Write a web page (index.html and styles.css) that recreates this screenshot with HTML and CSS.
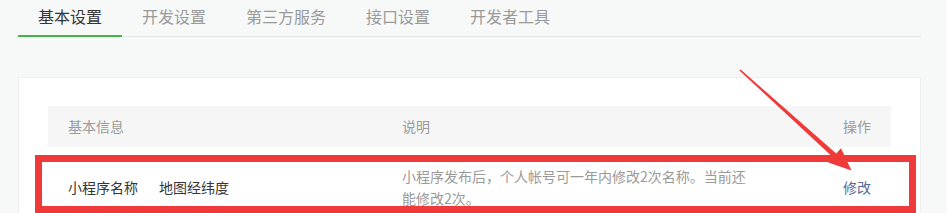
FILE: index.html
```html
<!DOCTYPE html>
<html lang="zh-CN">
<head>
<meta charset="utf-8">
<title>基本设置</title>
<link rel="stylesheet" href="styles.css">
</head>
<body>
<div class="page">
  <nav class="tabs">
    <a class="tab active">基本设置</a>
    <a class="tab">开发设置</a>
    <a class="tab">第三方服务</a>
    <a class="tab">接口设置</a>
    <a class="tab">开发者工具</a>
  </nav>
  <section class="card">
    <div class="table">
      <div class="thead">
        <div class="cell">基本信息</div>
        <div class="cell">说明</div>
        <div class="cell right">操作</div>
      </div>
      <div class="trow">
        <div class="cell name"><span class="label">小程序名称</span><span class="value">地图经纬度</span></div>
        <div class="cell desc"><p class="desc-text">小程序发布后，个人帐号可一年内修改2次名称。当前还能修改2次。</p></div>
        <div class="cell right"><a class="link">修改</a></div>
        <div class="highlight"></div>
      </div>
    </div>
  </section>
</div>
<svg class="arrow" width="947" height="213" viewBox="0 0 947 213">
  <polygon fill="#f03a3a" points="739.4,70.6 833.2,157.4 828.4,162.4 851.5,170.5 841,148.2 836.2,153.6 740.6,69.4"/>
</svg>
</body>
</html>
```
FILE: styles.css
```css
html, body {
  margin: 0;
  padding: 0;
  overflow: hidden;
  background: #f7f8f8;
}
body {
  position: relative;
  width: 947px;
  height: 213px;
  font-family: "Noto Sans CJK SC", "Noto Sans", sans-serif;
  font-size: 14px;
  color: #353535;
}
.page {
  padding-left: 18px;
  width: 903px;
}
.tabs {
  display: flex;
  border-bottom: 1px solid #e3e6e7;
  height: 36px;
}
.tab {
  display: block;
  padding: 0 20px 2px;
  line-height: 33px;
  font-size: 16px;
  color: #9a9a9a;
  border-bottom: 2px solid transparent;
  height: 35px;
  box-sizing: border-box;
  height: 37px;
}
.tab.active {
  color: #353535;
  border-bottom-color: #44b549;
}
.card {
  margin-top: 40px;
  background: #fff;
  border: 1px solid #eef0f0;
  padding: 28px 29px 30px;
}
.thead, .trow {
  display: grid;
  grid-template-columns: 334px 390px 1fr;
}
.thead {
  background: #f6f6f6;
  color: #9a9a9a;
}
.thead .cell {
  padding: 10px 20px;
  line-height: 21px;
}
.trow {
  position: relative;
  align-items: center;
}
.trow .cell {
  padding: 18px 20px;
  line-height: 22px;
}
.right {
  text-align: right;
}
.value {
  margin-left: 21px;
}
.desc-text {
  margin: 0;
  width: 352px;
  color: #9a9a9a;
}
.link {
  color: #576b95;
  text-decoration: none;
}
.highlight {
  position: absolute;
  left: -13px;
  top: 8px;
  right: -25px;
  bottom: 14px;
  border: 7px solid #f03a3a;
  pointer-events: none;
}
.arrow {
  position: absolute;
  left: 0;
  top: 0;
  pointer-events: none;
}
```
